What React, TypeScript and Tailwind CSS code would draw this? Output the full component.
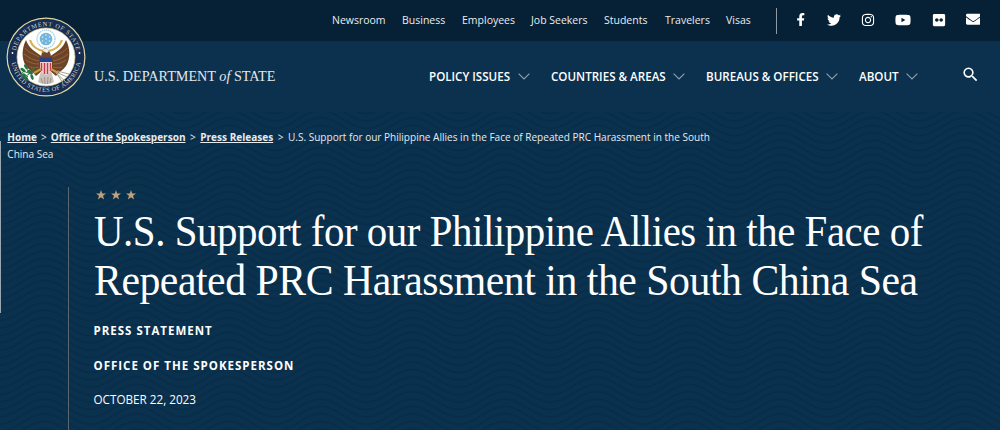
import React from 'react';
import { FaFacebookF, FaTwitter, FaInstagram, FaYoutube, FaFlickr, FaEnvelope } from 'react-icons/fa';
import { MdSearch } from 'react-icons/md';

const topLinks = [
  { label: 'Newsroom', box: 'w-[70px]' },
  { label: 'Business', box: 'w-[60px]' },
  { label: 'Employees', box: 'w-[69px]' },
  { label: 'Job Seekers', box: 'w-[73px]' },
  { label: 'Students', box: 'w-[61px]' },
  { label: 'Travelers', box: 'w-[61px]' },
  { label: 'Visas', box: 'w-[50px]' },
];

const mainLinks = [
  { label: 'POLICY ISSUES', box: 'w-[122px]' },
  { label: 'COUNTRIES & AREAS', box: 'w-[155px]' },
  { label: 'BUREAUS & OFFICES', box: 'w-[153px]' },
  { label: 'ABOUT', box: 'w-[102px]' },
];

function Chevron() {
  return (
    <svg width="12" height="7" viewBox="0 0 12 7" fill="none" stroke="#8fa0ae" strokeWidth="1.1">
      <path d="M0.6 0.6 6 6 11.4 0.6" />
    </svg>
  );
}

function Star() {
  return (
    <svg width="10" height="10" viewBox="0 0 20 20" fill="#c2a27c">
      <path d="M10 0l2.400 7H20l-6 4.600 2.200 7.600L10 14.600l-6.200 4.600L6 11.600 0 7h7.600z" />
    </svg>
  );
}

function Waves() {
  return (
    <svg className="absolute inset-0 h-full w-full" aria-hidden="true">
      <defs>
        <pattern id="waves" width="92" height="7.400" patternUnits="userSpaceOnUse" x="44.600" y="0">
          <g fill="none" stroke="#082c49" strokeWidth="1.700">
            {[-22.200, -14.800, -7.400, 0, 7.400, 14.800, 22.200, 29.600].map((y) => (
              <path key={y} d={`M0 ${y - 9}C17 ${y - 9} 29 ${y + 9} 46 ${y + 9}S75 ${y - 9} 92 ${y - 9}`} />
            ))}
          </g>
        </pattern>
      </defs>
      <rect width="100%" height="100%" fill="url(#waves)" />
    </svg>
  );
}

function Seal() {
  return (
    <svg width="80" height="80" viewBox="0 0 80 80" className="block">
      <defs>
        <path id="ringTop" d="M9.200 40a30.800 30.800 0 0 1 61.600 0" />
        <path id="ringBottom" d="M5 40a35 35 0 0 0 70 0" />
      </defs>
      <circle cx="40" cy="40" r="39.500" fill="#e3d9a5" />
      <circle cx="40" cy="40" r="38.300" fill="#172d52" />
      <circle cx="40" cy="40" r="29" fill="#fff" stroke="#d8c98d" strokeWidth="0.700" />
      <g fill="#d5d8cf" fontSize="6.300" fontFamily="Liberation Serif, serif" textAnchor="middle">
        <text><textPath href="#ringTop" startOffset="50%" textLength="84">DEPARTMENT OF STATE</textPath></text>
        <text><textPath href="#ringBottom" startOffset="50%" textLength="98">UNITED STATES OF AMERICA</textPath></text>
      </g>
      <circle cx="6.500" cy="36" r="0.900" fill="#fff" />
      <circle cx="73.500" cy="36" r="0.900" fill="#fff" />
      <circle cx="40" cy="22" r="9" fill="#fff" stroke="#a9cfe6" strokeWidth="1.300" strokeDasharray="1.500 0.600" />
      <circle cx="40" cy="22" r="6.300" fill="#72b5dc" />
      <g fill="#d5edf8">
        <circle cx="40" cy="18" r="0.800" /><circle cx="40" cy="22" r="0.800" /><circle cx="40" cy="26" r="0.800" />
        <circle cx="36.500" cy="20" r="0.800" /><circle cx="43.500" cy="20" r="0.800" />
        <circle cx="36.500" cy="24" r="0.800" /><circle cx="43.500" cy="24" r="0.800" />
      </g>
      <path d="M24 23c2 6 7 10 14 11M56 23c-2 6-7 10-14 11" fill="none" stroke="#d7b04f" strokeWidth="2.200" />
      <path d="M34 57c2-5 10-5 12 0l2 8c-5 3-11 3-16 0z" fill="#c9c3bb" />
      <path d="M35 61l1.500 5M38.500 60l.5 7M42 60l-.5 7M45 61l-1 5" stroke="#8a796d" strokeWidth="0.700" />
      <path d="M37 40C30 35 23 32 20 23c-4 8-5 18 0 26 3 4 7 6 10 10l7-6zM43 40c7-5 14-8 17-17 4 8 5 18 0 26-3 4-7 6-10 10l-7-6z" fill="#6d4328" />
      <path d="M19 31c4 5 9 6 14 9M18 37c5 4 9 6 15 7M20 43c4 3 8 4 13 4M24 50c3 1 6 1 9 0M61 31c-4 5-9 6-14 9M62 37c-5 4-9 6-15 7M60 43c-4 3-8 4-13 4M56 50c-3 1-6 1-9 0" fill="none" stroke="#a57345" strokeWidth="0.700" />
      <path d="M35 42c0-4 1-8 3-10 2-1 4 0 5 2 2 3 2 5 2 8z" fill="#70452b" />
      <path d="M37 34c0-3 5-3 6 0l-2 2z" fill="#f1eee5" />
      <path d="M37.500 34l-3 1 3 1z" fill="#d3a62c" />
      <path d="M34 42h12v9c0 4-3 6-6 7-3-1-6-3-6-7z" fill="#efcfd0" />
      <path d="M35.500 46v8M38.500 46v11M41.500 46v11M44.500 46v8" stroke="#c33c4a" strokeWidth="1.400" />
      <path d="M34 40.500h12V45H34z" fill="#283e8e" />
      <path d="M28 56l7-4M52 56l-7-4" stroke="#c99a33" strokeWidth="2.300" />
      <path d="M15 60c7-1 12-5 14-10M28 54l-5-5M25 57l-8-3M22 60l-6-5" stroke="#2d7a45" strokeWidth="1" fill="none" />
      <g fill="#287543">
        <ellipse cx="17" cy="53" rx="3" ry="1.500" transform="rotate(35 17 53)" />
        <ellipse cx="20" cy="50" rx="3" ry="1.400" transform="rotate(55 20 50)" />
        <ellipse cx="24" cy="55" rx="3.300" ry="1.600" transform="rotate(25 24 55)" />
        <ellipse cx="20" cy="61" rx="3.300" ry="1.500" transform="rotate(50 20 61)" />
        <ellipse cx="26" cy="60" rx="3" ry="1.400" transform="rotate(70 26 60)" />
        <ellipse cx="17" cy="58" rx="2.600" ry="1.300" />
      </g>
      <path d="M50 55l11 5M50 56l9 8M51 54l12 3M51 57l6 9" stroke="#a9a393" strokeWidth="1" />
    </svg>
  );
}

export default function App() {
  return (
    <div className="relative flex h-[430px] w-[1000px] flex-col overflow-hidden bg-[#0a314d] font-['Open_Sans',sans-serif] text-white">
      <div className="flex h-[41px] shrink-0 items-center bg-[#062035] pl-[332px] text-[10.500px] leading-4 text-[#e8edf0]">
        {topLinks.map((l) => (
          <a key={l.label} className={`${l.box} -mt-[2px] shrink-0 whitespace-nowrap`}>{l.label}</a>
        ))}
        <div className="h-[26px] w-px shrink-0 bg-[#8e9ba5]" />
        <div className="-mt-[2px] ml-[7px] flex items-center text-white">
          <span className="flex w-[33px] justify-center"><FaFacebookF size={13.500} /></span>
          <span className="flex w-[33px] justify-center"><FaTwitter size={14} /></span>
          <span className="flex w-[35px] justify-center"><FaInstagram size={14} /></span>
          <span className="flex w-[36px] justify-center"><FaYoutube size={16} /></span>
          <span className="flex w-[35px] justify-center"><FaFlickr size={14} /></span>
          <span className="flex w-[34px] justify-center"><FaEnvelope size={14.500} /></span>
        </div>
      </div>

      <header className="flex h-[71px] shrink-0 items-center bg-[#0b314e]">
        <div className="ml-[94px] w-[335px] whitespace-nowrap font-['Liberation_Serif',serif] text-[14.200px] text-[#e2e8ec]">
          U.S. DEPARTMENT <i>of</i> STATE
        </div>
        <nav className="flex text-[11.600px] font-semibold leading-4">
          {mainLinks.map((l) => (
            <a key={l.label} className={`${l.box} flex shrink-0 items-center gap-[7.500px] whitespace-nowrap`}>
              {l.label}
              <Chevron />
            </a>
          ))}
        </nav>
        <MdSearch className="-mt-1 shrink-0" size={19} />
      </header>

      <main className="relative flex-1">
        <Waves />
        <div className="relative flex h-full flex-col">
          <div className="ml-[7.300px] mt-[17px] h-[58px] w-[720px] text-[10.060px] leading-[17px] text-[#e6ebef]">
            <b className="underline">Home</b>
            <span className="mx-1 inline-block">&gt;</span>
            <b className="underline">Office of the Spokesperson</b>
            <span className="mx-[4.500px] inline-block">&gt;</span>
            <b className="underline">Press Releases</b>
            <span className="mx-[4.500px] inline-block">&gt;</span>
            U.S. Support for our Philippine Allies in the Face of Repeated PRC Harassment in the South
            <br />
            China Sea
          </div>
          <article className="ml-[68px] flex-1 border-l border-[#5a6670] pl-[24.500px]">
            <div className="flex gap-[5px] pl-[2px] pt-[3px]">
              <Star /><Star /><Star />
            </div>
            <h1 className="mt-[7px] whitespace-nowrap font-['Liberation_Serif',serif] text-[44px] leading-[49px]">
              <span className="block origin-left scale-x-[0.930] tracking-[-0.500px]">U.S. Support for our Philippine Allies in the Face of</span>
              <span className="block origin-left scale-x-[0.949] tracking-[-0.500px]">Repeated PRC Harassment in the South China Sea</span>
            </h1>
            <p className="mt-[18px] text-[11.500px] font-bold leading-4 tracking-[1px]">PRESS STATEMENT</p>
            <p className="mt-[19px] text-[11.500px] font-bold leading-4 tracking-[1px]">OFFICE OF THE SPOKESPERSON</p>
            <p className="mt-[17px] text-[11.700px] leading-4">OCTOBER 22, 2023</p>
          </article>
        </div>
      </main>

      <div className="absolute left-0 top-[141px] h-[172px] w-px bg-[#9aa7b1]" />
      <div className="absolute left-[6px] top-[17px]"><Seal /></div>
    </div>
  );
}
